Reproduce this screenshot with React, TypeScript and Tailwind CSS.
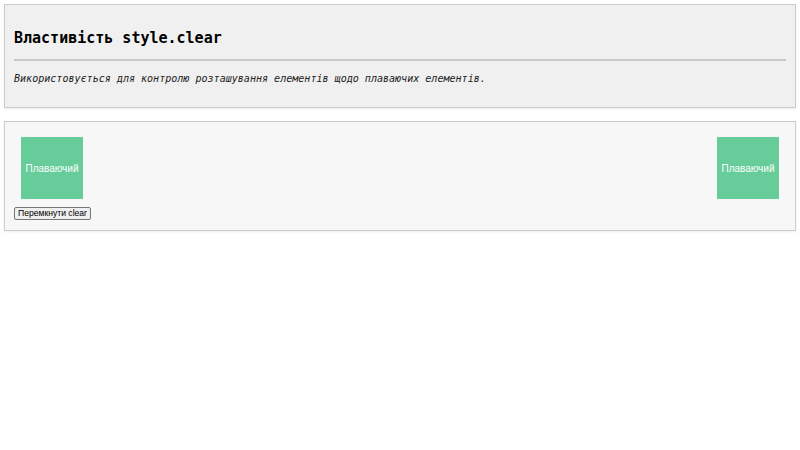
import React, { useState } from "react";

// Demo page for the CSS clear property
const FloatBox = () => (
  <div className="w-[62px] h-[62px] bg-[#66cc99] flex items-center justify-center text-white text-[10px] font-['Liberation_Sans',sans-serif]">
    Плаваючий
  </div>
);

export default function App() {
  const [cleared, setCleared] = useState(false);

  return (
    <div className="min-h-[450px] bg-white p-[4px] flex flex-col gap-[13px]">
      <div className="bg-[#f0f0f0] border border-[#cccccc] shadow-[0_1px_2px_rgba(0,0,0,0.08)] px-[9px] pt-[10px] pb-[21px]">
        <h2 className="mt-[12px] text-[15px] leading-[22px] font-bold text-black font-['DejaVu_Sans_Mono',monospace]">
          Властивість style.clear
        </h2>
        <hr className="mt-[10px] border-0 border-t-2 border-[#c8c8c8]" />
        <p className="mt-[10px] text-[10.05px] leading-[15px] italic text-[#222] font-['DejaVu_Sans_Mono',monospace]">
          Використовується для контролю розташування елементів щодо плаваючих елементів.
        </p>
      </div>

      <div className="bg-[#f7f7f7] border border-[#cccccc] shadow-[0_1px_2px_rgba(0,0,0,0.08)] px-[9px] pt-[15px] pb-[10px]">
        <div className="flex justify-between px-[7px]">
          <FloatBox />
          <FloatBox />
        </div>
        <button
          onClick={() => setCleared(!cleared)}
          className="mt-[8px] h-[13px] px-[3px] flex items-center text-[8.6px] font-normal leading-none text-black bg-[#efefef] border border-[#767676] rounded-[2px] font-['Liberation_Sans',sans-serif]"
        >
          Перемкнути clear
        </button>
      </div>
    </div>
  );
}
